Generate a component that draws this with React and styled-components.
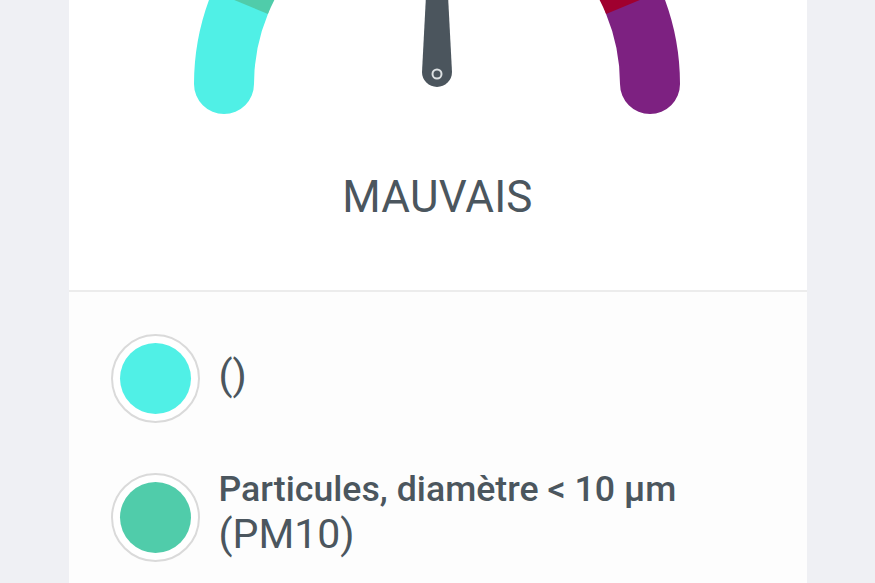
import React from 'react';
import styled, { createGlobalStyle } from 'styled-components';

const GlobalStyle = createGlobalStyle`
  html, body {
    margin: 0;
    padding: 0;
    overflow: hidden;
  }
  body {
    background: #eff0f4;
    font-family: Roboto, 'Liberation Sans', sans-serif;
  }
`;

const Page = styled.main`
  display: flex;
  justify-content: center;
`;

const Card = styled.section`
  width: 738px;
  margin-top: -160px;
  background: #fff;
`;

const GaugeBlock = styled.div`
  display: flex;
  flex-direction: column;
  align-items: center;
  padding-bottom: 67px;
`;

const GaugeSvg = styled.svg`
  display: block;
  width: 500px;
  height: 280px;
`;

const Level = styled.div`
  margin-top: 51px;
  font-size: 44px;
  line-height: 52px;
  font-weight: 400;
  color: #4b565e;
  letter-spacing: 0.2px;
`;

const List = styled.ul`
  list-style: none;
  margin: 0;
  padding: 42px 40px 60px 42px;
  border-top: 2px solid #ececec;
  background: #fdfdfd;
  display: flex;
  flex-direction: column;
  gap: 45px;
`;

const Item = styled.li`
  display: flex;
  align-items: center;
  gap: 19px;
`;

const Dot = styled.span`
  flex: none;
  width: 71px;
  height: 71px;
  padding: 7px;
  border: 2px solid #dadada;
  border-radius: 50%;
  background: #fff;

  &::after {
    content: '';
    display: block;
    width: 100%;
    height: 100%;
    border-radius: 50%;
    background: ${({ $color }) => $color};
  }
`;

const Label = styled.div`
  color: #4b565e;
  padding-bottom: 8px;
`;

const Name = styled.span`
  display: block;
  font-size: 35.7px;
  line-height: 42px;
  font-weight: 500;
`;

const Code = styled.span`
  display: block;
  font-size: 41px;
  line-height: 48px;
  font-weight: 400;
`;

const CX = 249;
const CY = 244;
const R = 213;

const point = (deg) => {
  const a = (deg * Math.PI) / 180;
  return [CX - R * Math.cos(a), CY - R * Math.sin(a)];
};

const arc = (from, to) => {
  const [x1, y1] = point(from);
  const [x2, y2] = point(to);
  return `M ${x1} ${y1} A ${R} ${R} 0 0 1 ${x2} ${y2}`;
};

// end segments first so their round caps sit under the middle ones
const segments = [
  { from: 0, to: 22.5, color: '#50f0e6', cap: 'round' },
  { from: 157.5, to: 180, color: '#7d2181', cap: 'round' },
  { from: 22.5, to: 56.25, color: '#50ccaa', cap: 'butt' },
  { from: 56.25, to: 90, color: '#f0e641', cap: 'butt' },
  { from: 90, to: 123.75, color: '#ff5050', cap: 'butt' },
  { from: 123.75, to: 157.5, color: '#a0002f', cap: 'butt' },
];

const Gauge = () => (
  <GaugeSvg viewBox="0 0 500 280">
    {segments.map((s) => (
      <path
        key={s.from}
        d={arc(s.from, s.to)}
        fill="none"
        stroke={s.color}
        strokeWidth="60"
        strokeLinecap={s.cap}
      />
    ))}
    <path
      d="M 243 60 Q 249 50 255 60 L 264 232 A 15 15 0 0 1 234 232 Z"
      fill="#4b555d"
    />
    <circle cx="249" cy="234" r="4.5" fill="none" stroke="#dde1e3" strokeWidth="2" />
  </GaugeSvg>
);

const pollutants = [
  { color: '#50f0e6', name: null, code: '()' },
  { color: '#50ccaa', name: 'Particules, diamètre < 10 µm', code: '(PM10)' },
];

export default function App() {
  return (
    <>
      <GlobalStyle />
      <Page>
        <Card>
          <GaugeBlock>
            <Gauge />
            <Level>MAUVAIS</Level>
          </GaugeBlock>
          <List>
            {pollutants.map((p) => (
              <Item key={p.code}>
                <Dot $color={p.color} />
                <Label>
                  {p.name && <Name>{p.name}</Name>}
                  <Code>{p.code}</Code>
                </Label>
              </Item>
            ))}
          </List>
        </Card>
      </Page>
    </>
  );
}
